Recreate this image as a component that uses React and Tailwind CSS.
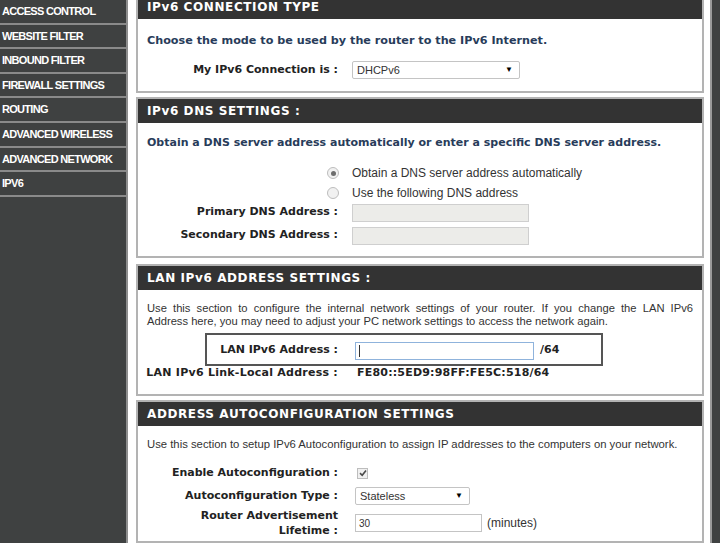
import React from "react";

const menu = [
  "ACCESS CONTROL",
  "WEBSITE FILTER",
  "INBOUND FILTER",
  "FIREWALL SETTINGS",
  "ROUTING",
  "ADVANCED WIRELESS",
  "ADVANCED NETWORK",
  "IPV6",
];

const bold = "font-['DejaVu_Sans',sans-serif] font-bold";
const plain = "font-['Liberation_Sans',Arial,sans-serif]";

function Section({ title, children, className = "" }) {
  return (
    <div className={`border-2 border-[#b3b3b3] bg-white ${className}`}>
      <div className={`h-[24px] bg-[#333333] pl-[9px] flex items-center text-white text-[12px] tracking-[0.6px] ${bold}`}>
        {title}
      </div>
      {children}
    </div>
  );
}

function Label({ children, className = "" }) {
  return (
    <div className={`w-[200px] shrink-0 text-right text-[11px] text-[#222] ${bold} ${className}`}>
      {children}
    </div>
  );
}

function Select({ value, width }) {
  return (
    <div
      className={`h-[18px] ${width} border border-[#c4c4c4] rounded-[2px] bg-white flex items-center justify-between pl-[4px] pr-[6px] text-[11px] text-[#333] ${plain}`}
    >
      <span>{value}</span>
      <span className="text-[8px] text-black">▼</span>
    </div>
  );
}

function Radio({ checked }) {
  return (
    <div className="w-[12px] h-[12px] rounded-full border border-[#bdbdbd] bg-[#f1f1f1] flex items-center justify-center">
      {checked && <div className="w-[5px] h-[5px] rounded-full bg-[#6d6d6d]" />}
    </div>
  );
}

export default function App() {
  return (
    <div className="w-[720px] h-[557px] bg-white">
      <div className="h-[543px] overflow-hidden flex">
        {/* left menu */}
        <div className="w-[128px] shrink-0 bg-[#3f4141] border-r-2 border-[#8e8e8e]">
          {menu.map((item) => (
            <div
              key={item}
              className={`h-[24.6px] border-b-2 border-[#8a8a8a] flex items-center pl-[2px] text-white text-[11px] tracking-[-0.7px] font-bold ${plain}`}
            >
              {item}
            </div>
          ))}
        </div>

        {/* main column */}
        <div className="w-[568px] ml-[8px] -mt-[7px] flex flex-col">
          <Section title="IPv6 CONNECTION TYPE">
            <div className="h-[72px] pt-[14px]">
              <p className={`pl-[9px] text-[11.2px] leading-[16px] text-[#283c5a] ${bold}`}>
                Choose the mode to be used by the router to the IPv6 Internet.
              </p>
              <div className="mt-[12px] flex items-center gap-[14px]">
                <Label>My IPv6 Connection is :</Label>
                <Select value="DHCPv6" width="w-[168px]" />
              </div>
            </div>
          </Section>

          <Section title="IPv6 DNS SETTINGS :" className="mt-[4px]">
            <div className="h-[133px] pt-[12px]">
              <p className={`pl-[9px] text-[11px] leading-[16px] text-[#283c5a] ${bold}`}>
                Obtain a DNS server address automatically or enter a specific DNS server address.
              </p>
              <div className={`mt-[12px] h-[20px] flex items-center text-[12px] text-[#333] ${plain}`}>
                <div className="w-[189px] shrink-0" />
                <Radio checked />
                <span className="ml-[13px]">Obtain a DNS server address automatically</span>
              </div>
              <div className={`h-[20px] flex items-center text-[12px] text-[#333] ${plain}`}>
                <div className="w-[189px] shrink-0" />
                <Radio />
                <span className="ml-[13px]">Use the following DNS address</span>
              </div>
              <div className="h-[19px] flex items-center gap-[14px]">
                <Label>Primary DNS Address :</Label>
                <div className="w-[177px] h-[18px] border border-[#cfcfcf] bg-[#ecece9]" />
              </div>
              <div className="mt-[4px] h-[19px] flex items-center gap-[14px]">
                <Label>Secondary DNS Address :</Label>
                <div className="w-[177px] h-[18px] border border-[#cfcfcf] bg-[#ecece9]" />
              </div>
            </div>
          </Section>

          <Section title="LAN IPv6 ADDRESS SETTINGS :" className="mt-[6px]">
            <div className="h-[104px] pt-[12px]">
              <div className={`pl-[9px] pr-[9px] text-[11.2px] leading-[13px] text-[#333] ${plain}`}>
                <p className="text-justify [text-align-last:justify]">
                  Use this section to configure the internal network settings of your router. If you change the LAN IPv6
                </p>
                <p>Address here, you may need to adjust your PC network settings to access the network again.</p>
              </div>
              <div className="relative mt-[13px] h-[19px] flex items-center gap-[17px]">
                <div className="absolute left-[67px] top-[-8px] w-[398px] h-[33px] border-2 border-[#555] pointer-events-none" />
                <Label>LAN IPv6 Address :</Label>
                <div className="w-[179px] h-[18px] border border-[#8fb3dc] bg-white flex items-center pl-[3px]">
                  <div className="w-px h-[12px] bg-[#333]" />
                </div>
                <span className={`-ml-[11px] text-[11px] text-[#222] ${bold}`}>/64</span>
              </div>
              <div className="mt-[6px] h-[14px] flex items-center gap-[19px]">
                <Label className="whitespace-nowrap tracking-[0.25px]">LAN IPv6 Link-Local Address :</Label>
                <span className={`text-[11px] text-[#222] tracking-[0.2px] ${bold}`}>FE80::5ED9:98FF:FE5C:518/64</span>
              </div>
            </div>
          </Section>

          <Section title="ADDRESS AUTOCONFIGURATION SETTINGS" className="mt-[4px] flex-1">
            <div className="pt-[12px]">
              <p className={`pl-[9px] text-[11.3px] leading-[13px] text-[#333] ${plain}`}>
                Use this section to setup IPv6 Autoconfiguration to assign IP addresses to the computers on your network.
              </p>
              <div className="mt-[13px] h-[18px] flex items-center gap-[19px]">
                <Label>Enable Autoconfiguration :</Label>
                <div className="w-[11px] h-[11px] border border-[#bdbdbd] bg-[#f0f0f0] flex items-center justify-center">
                  <svg width="8" height="8" viewBox="0 0 8 8">
                    <path d="M1 4.2 L3.2 6.3 L7 1.5" fill="none" stroke="#4a4a4a" strokeWidth="1.6" />
                  </svg>
                </div>
              </div>
              <div className="mt-[5px] h-[18px] flex items-center gap-[17px]">
                <Label>Autoconfiguration Type :</Label>
                <Select value="Stateless" width="w-[115px]" />
              </div>
              <div className="mt-[3px] flex items-center gap-[17px]">
                <Label className="leading-[15px]">
                  Router Advertisement
                  <br />
                  Lifetime :
                </Label>
                <div className={`w-[127px] h-[18px] border border-[#c4c4c4] bg-white flex items-center pl-[3px] text-[10px] text-[#333] ${plain}`}>
                  30
                </div>
                <span className={`-ml-[12px] text-[12px] text-[#333] ${plain}`}>(minutes)</span>
              </div>
            </div>
          </Section>
        </div>

        {/* right edge strip */}
        <div className="ml-[6px] w-[10px] shrink-0 bg-[#3f4141] border-l-2 border-[#9a9a9a]" />
      </div>
    </div>
  );
}
